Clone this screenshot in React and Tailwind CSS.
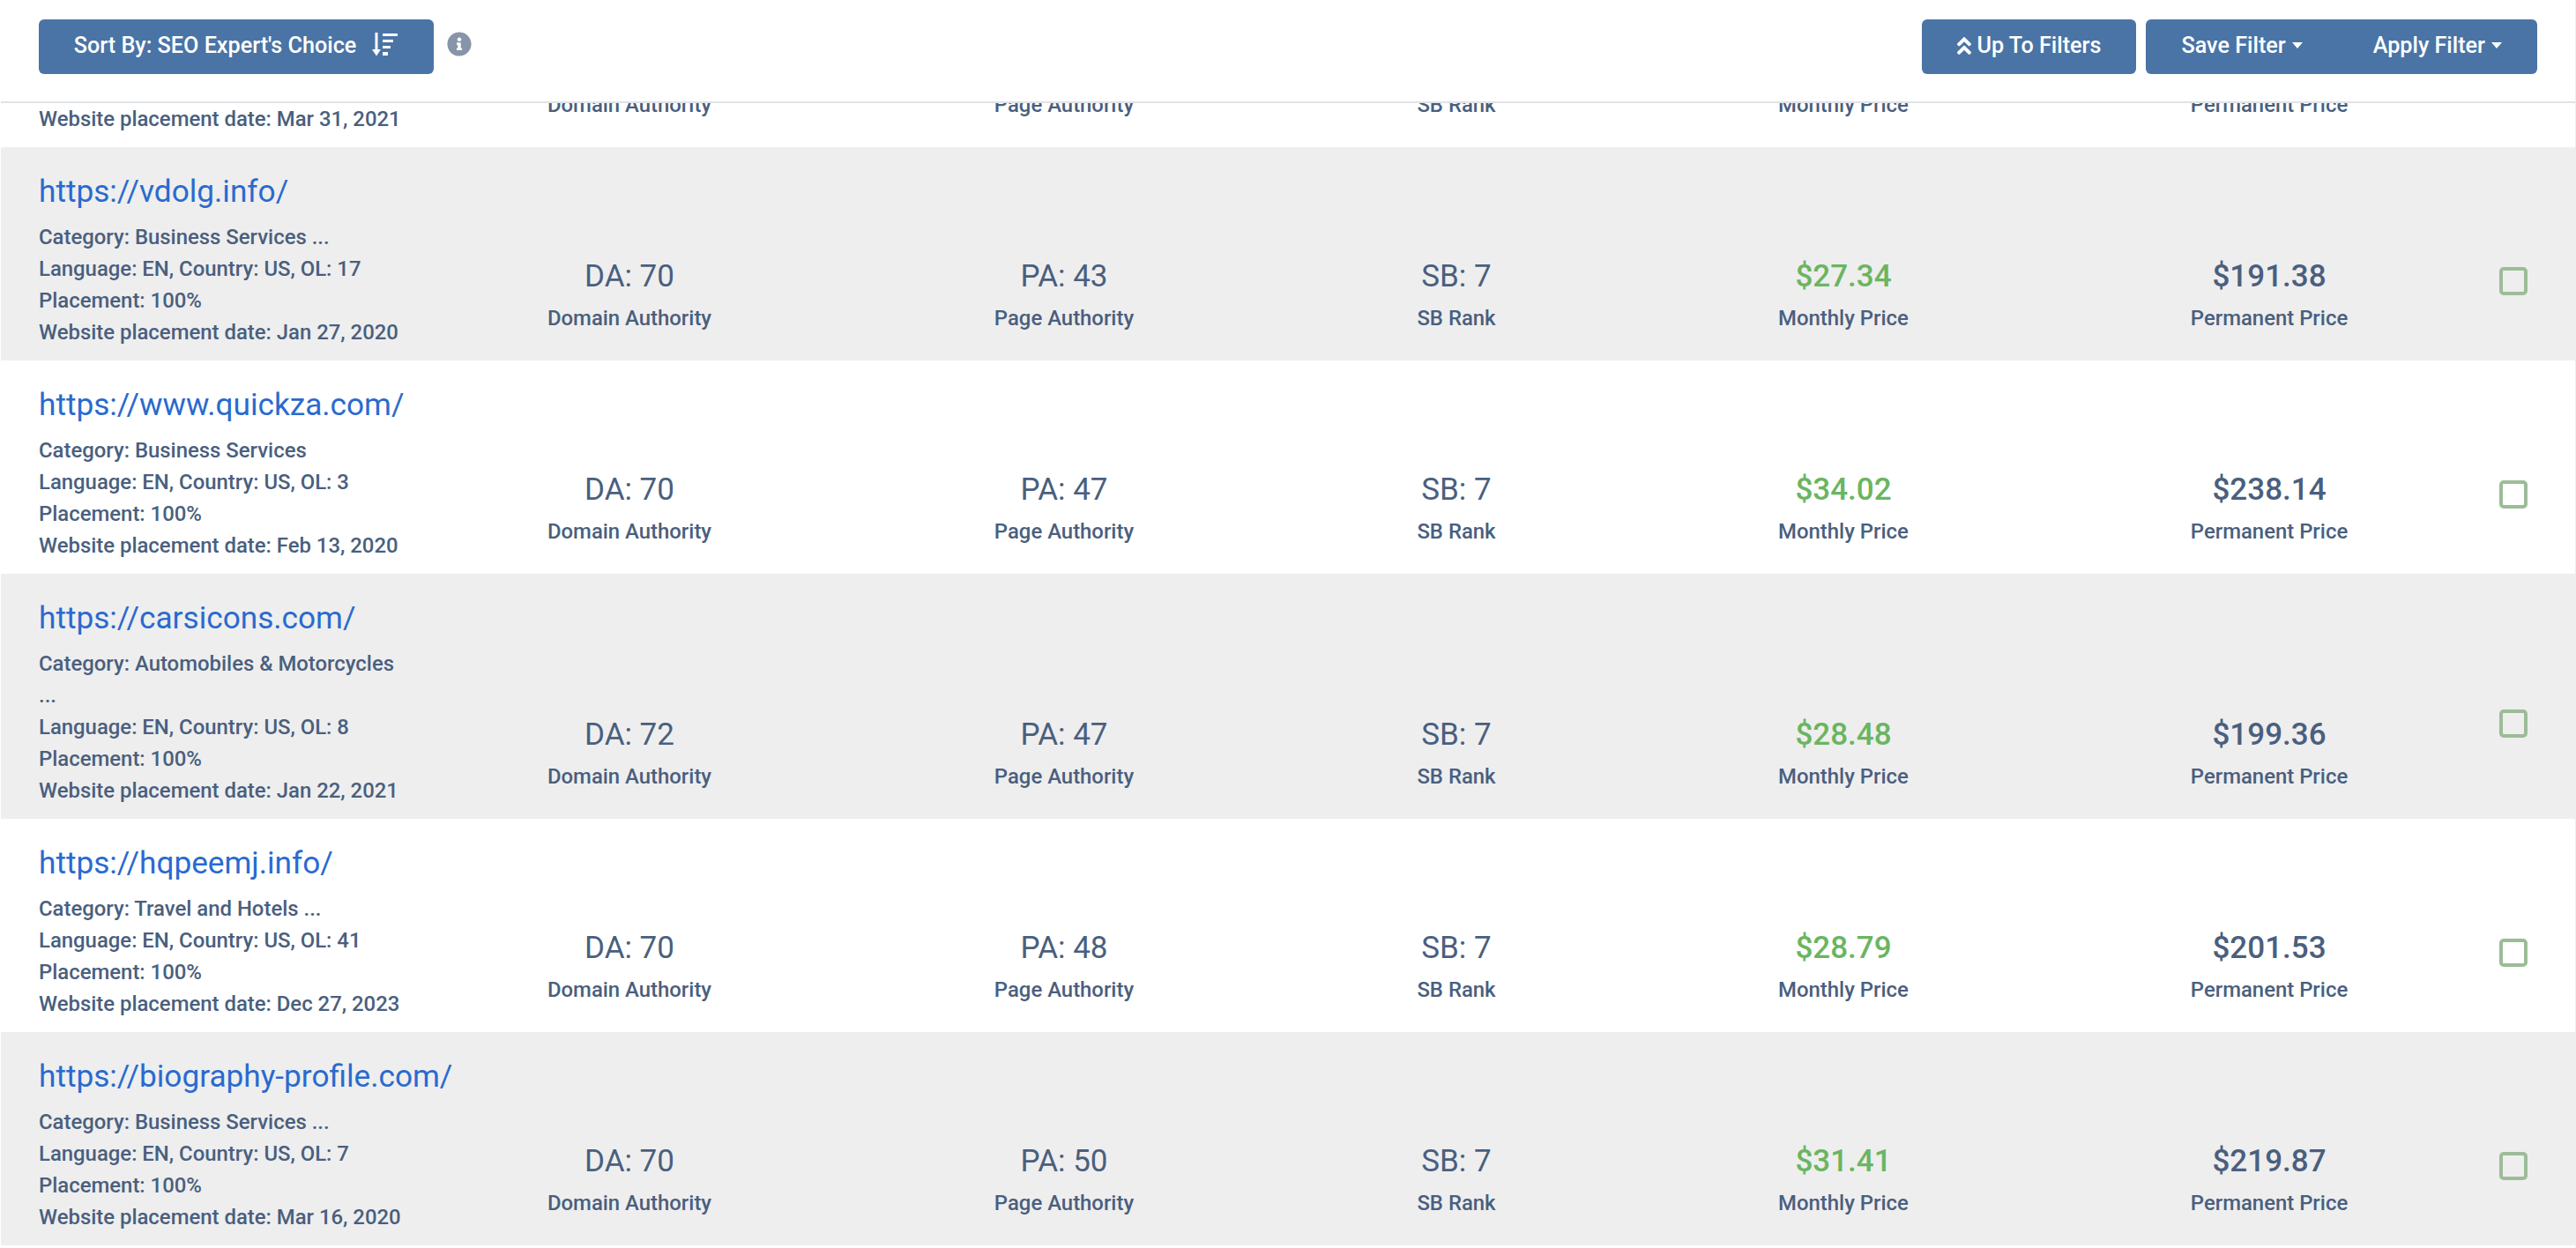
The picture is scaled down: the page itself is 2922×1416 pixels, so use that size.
import { FaAngleDoubleUp, FaInfoCircle } from "react-icons/fa";

const ROWS = [
  { url: "https://vdolg.info/", category: ["Category: Business Services ..."], ol: 17, date: "Jan 27, 2020", da: 70, pa: 43, sb: 7, monthly: "$27.34", permanent: "$191.38", shaded: true },
  { url: "https://www.quickza.com/", category: ["Category: Business Services"], ol: 3, date: "Feb 13, 2020", da: 70, pa: 47, sb: 7, monthly: "$34.02", permanent: "$238.14" },
  { url: "https://carsicons.com/", category: ["Category: Automobiles & Motorcycles", "..."], ol: 8, date: "Jan 22, 2021", da: 72, pa: 47, sb: 7, monthly: "$28.48", permanent: "$199.36", shaded: true },
  { url: "https://hqpeemj.info/", category: ["Category: Travel and Hotels ..."], ol: 41, date: "Dec 27, 2023", da: 70, pa: 48, sb: 7, monthly: "$28.79", permanent: "$201.53" },
  { url: "https://biography-profile.com/", category: ["Category: Business Services ..."], ol: 7, date: "Mar 16, 2020", da: 70, pa: 50, sb: 7, monthly: "$31.41", permanent: "$219.87", shaded: true },
];

const GRID = "grid grid-cols-[469px_488px_498px_392px_486px_480px_1fr]";

function SortIcon() {
  return (
    <svg width="30" height="27" viewBox="0 0 30 27" fill="white" className="mb-[4px] ml-[18px]">
      <path d="M3.5 0h3v19H10l-5 7.500-5-7.500h3.500z" />
      <rect x="12" y="1" width="17" height="3" />
      <rect x="12" y="8" width="12" height="3" />
      <rect x="12" y="15" width="9" height="3" />
      <rect x="12" y="22" width="6" height="4" />
    </svg>
  );
}

function Caret() {
  return <span className="mb-[2px] ml-[7px] h-0 w-0 border-x-[6.5px] border-t-[7px] border-x-transparent border-t-white" />;
}

function Stat({ value, label, valueClass = "font-normal" }) {
  return (
    <div className="flex flex-col items-center justify-end pb-[30px]">
      {value && <div className={`mb-[2px] text-[35px] leading-[54px] ${valueClass}`}>{value}</div>}
      <div className="text-[23.9px] font-medium leading-[36px]">{label}</div>
    </div>
  );
}

function Row({ row }) {
  return (
    <div className={`${GRID} ${row.shaded ? "bg-[#eeeeee]" : "bg-white"}`}>
      <div className="pl-[43px] pt-[23px] pb-[14px]">
        <a href="#" className="mb-[7px] block whitespace-nowrap text-[35.2px] leading-[54px] text-[#2a6acf]">{row.url}</a>
        <div className="text-[23.9px] font-medium leading-[36px]">
          {row.category.map((c) => <div key={c}>{c}</div>)}
          <div>Language: EN, Country: US, OL: {row.ol}</div>
          <div>Placement: 100%</div>
          <div>Website placement date: {row.date}</div>
        </div>
      </div>
      <Stat value={`DA: ${row.da}`} label="Domain Authority" />
      <Stat value={`PA: ${row.pa}`} label="Page Authority" />
      <Stat value={`SB: ${row.sb}`} label="SB Rank" />
      <Stat value={row.monthly} label="Monthly Price" valueClass="font-medium text-[#6ab561]" />
      <Stat value={row.permanent} label="Permanent Price" valueClass="font-medium" />
      <div className="flex items-center pl-[21px] pt-[62px]">
        <span className="block h-[32px] w-[32px] rounded-[5px] border-[4px] border-[#9cbc98]" />
      </div>
    </div>
  );
}

export default function App() {
  return (
    <div className="h-screen overflow-hidden border-x border-l-white border-r-[#eeeeee] bg-white font-['Roboto',sans-serif] text-[#4a5f7e]">
      <header className="flex h-[117px] items-start border-b-2 border-[#e0e3e8] pl-[43px] pr-[43px] pt-[22px]">
        <button className="flex h-[62px] w-[448px] items-center justify-center rounded-[6px] bg-[#4a74a5] pb-[2px] text-[25.2px] font-medium text-white">
          Sort By: SEO Expert's Choice
          <SortIcon />
        </button>
        <FaInfoCircle className="ml-[15px] mt-[14px] text-[28px] text-[#8795a8]" />
        <button className="ml-auto flex h-[62px] items-center rounded-[6px] bg-[#4a74a5] px-[40px] pb-[2px] text-[25.2px] font-medium text-white">
          <FaAngleDoubleUp className="mr-[6px] h-[26px] w-[16px]" />
          Up To Filters
        </button>
        <div className="ml-[11px] flex h-[62px] rounded-[6px] bg-[#4a74a5] text-[25.2px] font-medium text-white">
          <button className="flex items-center px-[40px] pb-[2px]">Save Filter<Caret /></button>
          <button className="flex items-center px-[40px] pb-[2px]">Apply Filter<Caret /></button>
        </div>
      </header>

      <div className="flex h-[50px] flex-col justify-end overflow-hidden">
        <div className={GRID}>
          <div className="self-end pl-[43px] pb-[14px] text-[23.9px] font-medium leading-[36px]">Website placement date: Mar 31, 2021</div>
          <Stat label="Domain Authority" />
          <Stat label="Page Authority" />
          <Stat label="SB Rank" />
          <Stat label="Monthly Price" />
          <Stat label="Permanent Price" />
        </div>
      </div>

      {ROWS.map((row) => <Row key={row.url} row={row} />)}
    </div>
  );
}
